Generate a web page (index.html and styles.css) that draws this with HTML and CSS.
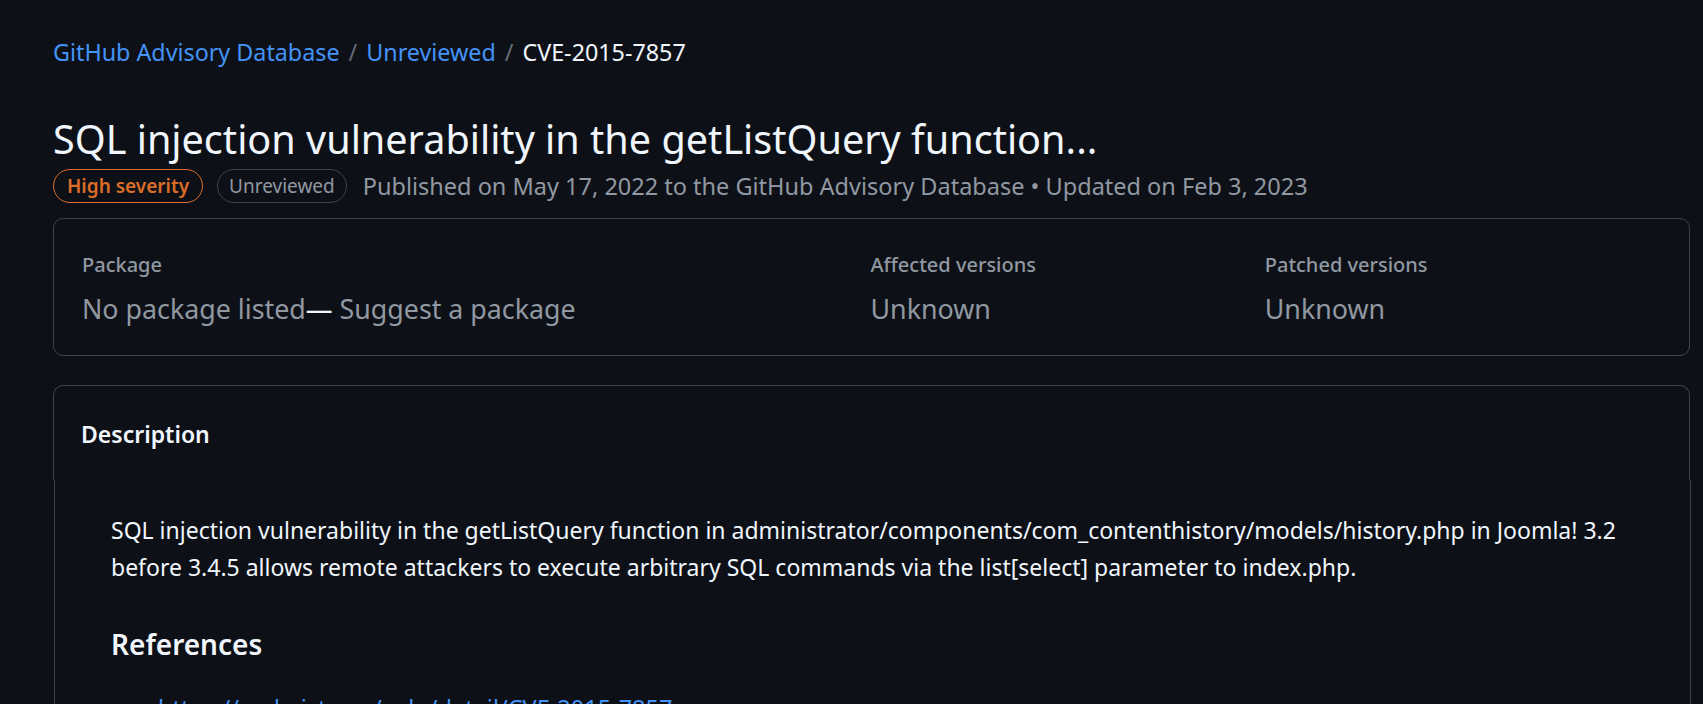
FILE: index.html
```html
<!DOCTYPE html>
<html lang="en">
<head>
<meta charset="utf-8">
<title>CVE-2015-7857 · GitHub Advisory Database</title>
<link rel="stylesheet" href="styles.css">
</head>
<body>
<main class="page">
  <nav class="crumbs">
    <a href="#" class="crumb-link">GitHub Advisory Database</a>
    <span class="crumb-sep">/</span>
    <a href="#" class="crumb-link">Unreviewed</a>
    <span class="crumb-sep">/</span>
    <span class="crumb-current">CVE-2015-7857</span>
  </nav>

  <h1 class="title">SQL injection vulnerability in the getListQuery function...</h1>

  <div class="meta">
    <span class="label label-high">High severity</span>
    <span class="label label-muted">Unreviewed</span>
    <span class="meta-text">Published on May 17, 2022 to the GitHub Advisory Database • Updated on Feb 3, 2023</span>
  </div>

  <section class="pkg-box">
    <div class="pkg-col">
      <div class="pkg-label">Package</div>
      <div class="pkg-value">No package listed<span class="dash">—</span> <a href="#" class="pkg-suggest">Suggest a package</a></div>
    </div>
    <div class="pkg-col">
      <div class="pkg-label">Affected versions</div>
      <div class="pkg-value">Unknown</div>
    </div>
    <div class="pkg-col">
      <div class="pkg-label">Patched versions</div>
      <div class="pkg-value">Unknown</div>
    </div>
  </section>

  <section class="desc">
    <div class="desc-head">Description</div>
    <div class="desc-body">
      <p class="desc-text">SQL injection vulnerability in the getListQuery function in administrator/components/com_contenthistory/models/history.php in Joomla! 3.2 before 3.4.5 allows remote attackers to execute arbitrary SQL commands via the list[select] parameter to index.php.</p>
      <h3 class="refs-title">References</h3>
      <ul class="refs">
        <li><a href="#" class="ref-link">https://nvd.nist.gov/vuln/detail/CVE-2015-7857</a></li>
        <li><a href="#" class="ref-link">https://www.exploit-db.com/exploits/38797/</a></li>
      </ul>
    </div>
  </section>
</main>
</body>
</html>
```

FILE: styles.css
```css
html, body {
  margin: 0;
  padding: 0;
  background: #0d1117;
  height: 100%;
  overflow: hidden;
}

body {
  font-family: "Noto Sans", "Open Sans", sans-serif;
  color: #f0f6fc;
}

.page {
  padding: 34px 13px 0 53px;
  display: flex;
  flex-direction: column;
}

a {
  text-decoration: none;
}

.crumbs {
  font-size: 23.3px;
  line-height: 36px;
  display: flex;
  gap: 9px;
}

.crumb-link {
  color: #4493f8;
}

.crumb-sep {
  color: #656c76;
}

.crumb-current {
  color: #f0f6fc;
}

.title {
  margin: 45px 0 0;
  font-size: 39.6px;
  line-height: 48px;
  font-weight: 400;
  color: #f0f6fc;
}

.meta {
  margin-top: 6px;
  display: flex;
  align-items: center;
  height: 34px;
  gap: 14px;
}

.label {
  box-sizing: border-box;
  height: 34px;
  line-height: 32px;
  padding: 0 13px;
  border: 1px solid;
  border-radius: 17px;
  font-size: 19px;
}

.label-high {
  color: #db6d28;
  border-color: #db6d28;
  font-weight: 600;
}

.label-muted {
  padding: 0 11px;
  color: #9198a1;
  border-color: #3d444d;
}

.meta-text {
  margin-left: 2px;
  font-size: 23.5px;
  line-height: 34px;
  color: #9198a1;
}

.pkg-box {
  margin-top: 15px;
  border: 1px solid #3d444d;
  border-radius: 10px;
  padding: 32px 30px 27px 28px;
  display: grid;
  grid-template-columns: 2fr 1fr 1fr;
}

.pkg-label {
  font-size: 20px;
  line-height: 28px;
  font-weight: 500;
  color: #9198a1;
}

.pkg-value {
  margin-top: 10px;
  font-size: 26.8px;
  line-height: 39px;
  color: #9198a1;
}

.dash {
  color: #f0f6fc;
}

.pkg-suggest {
  color: #9198a1;
}

.desc {
  margin-top: 29px;
  display: flex;
  flex-direction: column;
}

.desc-head {
  border: 1px solid #3d444d;
  border-bottom: none;
  border-radius: 10px 10px 0 0;
  padding: 30px 27px 28px;
  font-size: 23px;
  line-height: 36px;
  font-weight: 600;
  color: #f0f6fc;
}

.desc-body {
  margin-left: 1px;
  margin-right: -1px;
  border-left: 1px solid #3d444d;
  border-right: 1px solid #3d444d;
  padding: 32px 56px 0;
}

.desc-text {
  margin: 0;
  font-size: 23px;
  line-height: 37px;
  color: #f0f6fc;
}

.refs-title {
  margin: 38px 0 0;
  font-size: 28px;
  line-height: 40px;
  font-weight: 600;
  color: #f0f6fc;
}

.refs {
  margin: 26px 0 0;
  padding-left: 47px;
  font-size: 23.5px;
  line-height: 37px;
  color: #f0f6fc;
}

.ref-link {
  color: #4493f8;
}
```
